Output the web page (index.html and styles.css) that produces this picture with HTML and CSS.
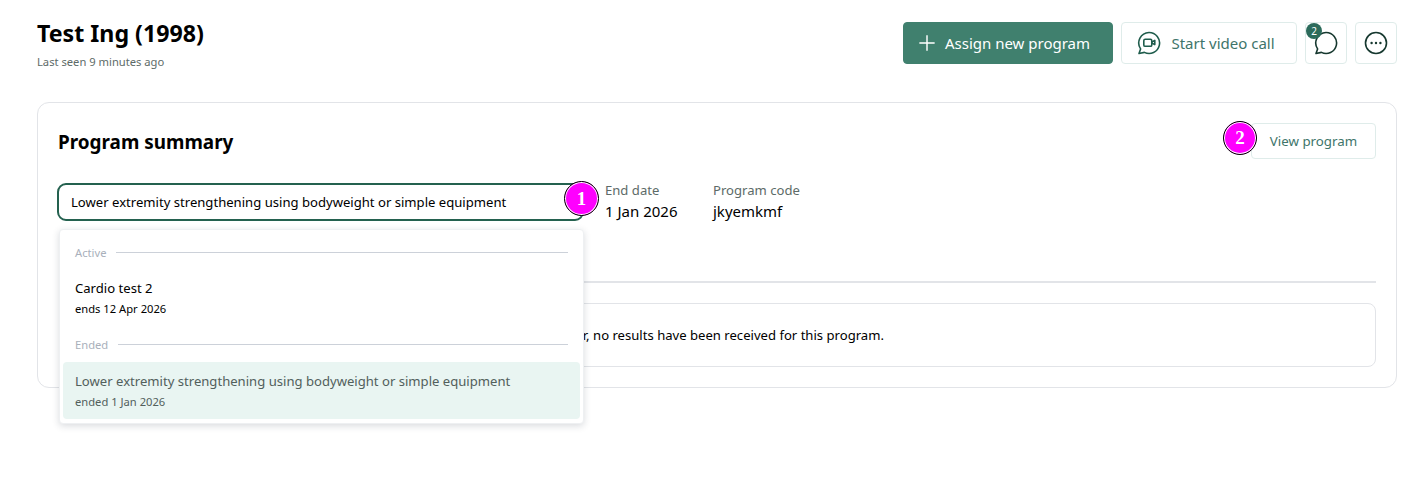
FILE: index.html
```html
<!DOCTYPE html>
<html lang="en">
<head>
<meta charset="utf-8">
<title>Program summary</title>
<link rel="stylesheet" href="styles.css">
</head>
<body>
<main class="page">
  <header class="top">
    <div class="who">
      <h1 class="name">Test Ing (1998)</h1>
      <p class="seen">Last seen 9 minutes ago</p>
    </div>
    <div class="actions">
      <button class="btn btn-primary">
        <svg class="ico" viewBox="0 0 20 20"><path d="M10 1.5v17M1.5 10h17" fill="none" stroke="#fff" stroke-width="1.6"/></svg>
        Assign new program
      </button>
      <button class="btn btn-call">
        <svg class="ico-lg" viewBox="0 0 24 24" fill="none" stroke="#1f5c4c" stroke-width="1.6"><path d="M12 1.5a10.5 10.5 0 1 1-4.6 19.9L2 22.5l1.6-4.6A10.5 10.5 0 0 1 12 1.5z" stroke-linejoin="round"/><rect x="6.8" y="8.3" width="8" height="7" rx="1.4"/><path d="M14.8 11l3-1.6v4.2l-3-1.6" stroke-linejoin="round"/></svg>
        Start video call
      </button>
      <button class="btn btn-icon">
        <span class="count">2</span>
        <svg class="ico-lg" viewBox="0 0 24 24" fill="none" stroke="#16382f" stroke-width="1.6"><path d="M12 1.5a10.5 10.5 0 1 1-4.6 19.9L2 22.5l1.6-4.6A10.5 10.5 0 0 1 12 1.5z" stroke-linejoin="round"/></svg>
      </button>
      <button class="btn btn-icon">
        <svg class="ico-lg" viewBox="0 0 24 24" fill="none" stroke="#16382f" stroke-width="1.6"><circle cx="12" cy="12" r="10.5"/><circle cx="7.6" cy="12" r="1.2" fill="#16382f" stroke="none"/><circle cx="12" cy="12" r="1.2" fill="#16382f" stroke="none"/><circle cx="16.4" cy="12" r="1.2" fill="#16382f" stroke="none"/></svg>
      </button>
    </div>
  </header>

  <section class="card">
    <div class="card-head">
      <h2 class="card-title">Program summary</h2>
      <button class="btn-view">View program</button>
      <span class="marker marker-two">2</span>
    </div>
    <div class="meta">
      <div class="picker">
        <div class="select">Lower extremity strengthening using bodyweight or simple equipment</div>
        <span class="marker marker-one">1</span>
        <div class="menu">
          <div class="group"><span>Active</span><i></i></div>
          <div class="option">
            <div class="opt-name">Cardio test 2</div>
            <div class="opt-date">ends 12 Apr 2026</div>
          </div>
          <div class="group group-ended"><span>Ended</span><i></i></div>
          <div class="option option-selected">
            <div class="opt-name">Lower extremity strengthening using bodyweight or simple equipment</div>
            <div class="opt-date">ended 1 Jan 2026</div>
          </div>
        </div>
      </div>
      <div class="field field-date">
        <div class="field-label">End date</div>
        <div class="field-value">1 Jan 2026</div>
      </div>
      <div class="field">
        <div class="field-label">Program code</div>
        <div class="field-value">jkyemkmf</div>
      </div>
    </div>
    <hr class="rule">
    <div class="notice">However, no results have been received for this program.</div>
  </section>
</main>
</body>
</html>
```
FILE: styles.css
```css
* { box-sizing: border-box; }
html, body { margin: 0; padding: 0; background: #fff; }
body { font-family: "Noto Sans", "Open Sans", sans-serif; color: #000; }
.page { padding: 22px 14px 0 37px; min-height: 489px; }

.top { display: flex; justify-content: space-between; align-items: flex-start; height: 80px; }
.name { margin: 0; font-size: 23.2px; line-height: 23px; font-weight: 700; }
.seen { margin: 9px 0 0; font-size: 11.2px; line-height: 15px; color: #5d6b68; }
.actions { display: flex; gap: 8px; }

.btn { display: flex; align-items: center; justify-content: center; height: 42px; border-radius: 4px; border: 1px solid #dfecea; background: #fff; font: inherit; font-size: 15px; padding: 0; position: relative; }
.btn-primary { width: 210px; background: #40806e; border-color: #40806e; color: #fff; gap: 9px; padding-right: 8px; }
.btn-call { width: 176px; color: #40756a; gap: 10px; padding-right: 6px; }
.btn-icon { width: 42px; }
.ico { width: 18px; height: 18px; }
.ico-lg { width: 24px; height: 24px; }
.count { position: absolute; left: 0; top: 0; width: 16px; height: 16px; border-radius: 50%; background: #2c6b5b; color: #fff; font-size: 10px; line-height: 16px; text-align: center; }

.card { height: 286px; border: 1px solid #e2e4e8; border-radius: 12px; padding: 20px 20px 20px 21px; }
.card-head { display: flex; justify-content: space-between; align-items: center; height: 36px; position: relative; }
.card-title { margin: 0 0 0 -1px; padding-top: 2px; font-size: 18.9px; font-weight: 700; }
.btn-view { width: 125px; height: 36px; border: 1px solid #dfecea; border-radius: 4px; background: #fff; font: inherit; font-size: 13.3px; color: #40756a; padding: 0; }

.marker { position: absolute; width: 34px; height: 34px; border-radius: 50%; background: #f0f; border: 1px solid #000; box-shadow: inset 0 0 0 1px #fff; color: #fff; font: bold 19px/32px "Liberation Serif", serif; text-align: center; z-index: 3; }
.marker-two { right: 119px; top: -2px; }
.marker-one { left: 507px; top: -2px; width: 35px; height: 35px; line-height: 33px; }

.meta { display: flex; margin-top: 24px; height: 62px; }
.picker { position: relative; width: 527px; margin-left: -2px; margin-right: 21px; }
.select { height: 38px; border: 2px solid #24614f; border-radius: 9px; padding: 0 12px; font-size: 13.1px; line-height: 34px; white-space: nowrap; }
.menu { position: absolute; left: 2px; right: 0; top: 46px; height: 195px; background: #fff; border: 1px solid #eef0f2; border-radius: 4px; box-shadow: 0 2px 7px rgba(30, 40, 60, .17); z-index: 2; padding: 0 3px; }
.group { display: flex; align-items: center; gap: 10px; height: 16px; margin: 14px 0 0; padding: 0 12px; font-size: 11.2px; color: #a9b0bb; }
.group i { flex: 1; height: 1px; background: #ccd1d9; }
.group-ended { margin-top: 19px; }
.option { padding: 0 12px; border-radius: 4px; }
.group + .option { margin-top: 18px; }
.group-ended + .option { margin-top: 10px; padding-top: 9px; height: 57px; }
.opt-name { font-size: 13.1px; line-height: 20px; }
.opt-date { font-size: 11.2px; line-height: 16px; margin-top: 3px; }
.option-selected { background: #e9f5f2; color: #52605c; }
.field { margin-right: 33px; }
.field-date { width: 75px; }
.field-label { font-size: 13.1px; line-height: 16px; margin-top: -1px; color: #5d6b68; white-space: nowrap; }
.field-value { font-size: 15px; line-height: 20px; margin-top: 3px; white-space: nowrap; }

.rule { border: 0; height: 2px; background: #e2e4e8; margin: 36px 0 20px; }
.notice { height: 64px; border: 1px solid #e2e4e8; border-radius: 8px; padding: 0 16px 0 474px; font-size: 13.1px; line-height: 62px; white-space: nowrap; }
```
